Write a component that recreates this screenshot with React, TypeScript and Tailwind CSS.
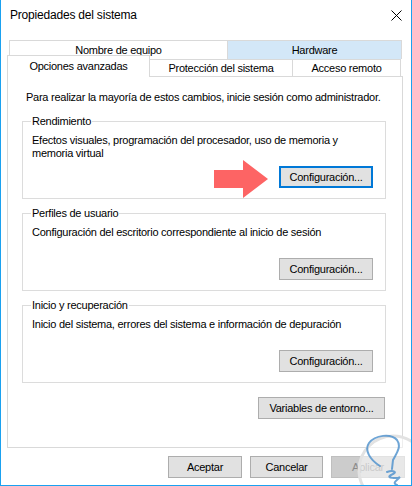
import type { ReactNode } from 'react'

const FONT = "font-['Segoe_UI','Liberation_Sans',Arial,sans-serif]"

function Boton({ children, ancho, foco, deshabilitado }: { children: ReactNode; ancho: string; foco?: boolean; deshabilitado?: boolean }) {
  const base = 'h-[22px] flex items-center justify-center leading-[14px]'
  let estilo = 'bg-[#e1e1e1] border border-[#adadad] text-black'
  if (foco) estilo = 'bg-[#e1e1e1] border-2 border-[#0078d7] text-black'
  if (deshabilitado) estilo = 'bg-[#cccccc] border border-[#bfbfbf] text-[#8a8a8a]'
  return <div className={`${base} ${estilo} ${ancho}`}>{children}</div>
}

function Grupo({ titulo, children, boton }: { titulo: string; children: ReactNode; boton: ReactNode }) {
  return (
    <div className="relative w-[364px] h-[78px] border border-[#dcdcdc] flex flex-col pl-[9px] pr-[12px] pt-[12px] pb-[10px]">
      <span className="absolute -top-[8px] left-[8px] bg-white px-[1px] leading-[14px]">{titulo}</span>
      <div className="leading-[13px] whitespace-nowrap">{children}</div>
      <div className="mt-auto self-end">{boton}</div>
    </div>
  )
}

export default function App() {
  return (
    <div className={`relative w-[412px] h-[486px] overflow-hidden bg-white border-l border-r border-b border-[#1aa1f0] text-[11px] tracking-[-0.25px] text-black ${FONT}`}>
      {/* barra de título */}
      <div className="h-[30px] flex items-center justify-between pl-[9px] pr-[9px]">
        <span className="text-[12px] tracking-[-0.2px] leading-[14px]">Propiedades del sistema</span>
        <svg width="11" height="11" viewBox="0 0 11 11" className="mt-[1px]">
          <path d="M0.5 0.5 L10.5 10.5 M10.5 0.5 L0.5 10.5" stroke="#000" strokeWidth="1" />
        </svg>
      </div>

      <div className="mt-[10px] pl-[6px]">
        {/* fila de pestañas trasera */}
        <div className="flex h-[19px] ml-[2px]">
          <div className="w-[218px] border-t border-l border-[#d9d9d9] flex justify-center pt-[2px] leading-[14px]">
            Nombre de equipo
          </div>
          <div className="w-[175px] border-t border-l border-r border-[#d9d9d9] bg-[#d3e7f8] flex justify-center pt-[2px] leading-[14px]">
            Hardware
          </div>
        </div>

        {/* fila de pestañas delantera */}
        <div className="relative z-10 flex items-end h-[21px] -mt-[4px]">
          <div className="w-[143px] h-[22px] -mb-[1px] bg-white border-t border-l border-r border-[#d9d9d9] flex justify-center pt-[3px] leading-[14px]">
            Opciones avanzadas
          </div>
          <div className="w-[143px] h-[17px] bg-white border-t border-r border-[#d9d9d9] flex items-center justify-center leading-[14px]">
            Protección del sistema
          </div>
          <div className="w-[108px] h-[17px] bg-white border-t border-r border-[#d9d9d9] flex items-center justify-center leading-[14px]">
            Acceso remoto
          </div>
        </div>

        {/* panel */}
        <div className="w-[396px] h-[372px] border border-[#d9d9d9] pl-[14px] pt-[13px]">
          <p className="ml-[4px] leading-[14px] whitespace-nowrap">
            Para realizar la mayoría de estos cambios, inicie sesión como administrador.
          </p>

          <div className="mt-[17px] flex flex-col gap-[14px]">
            <div className="relative">
              <Grupo
                titulo="Rendimiento"
                boton={<Boton ancho="w-[94px]" foco>Configuración...</Boton>}
              >
                Efectos visuales, programación del procesador, uso de memoria y
                <br />
                memoria virtual
              </Grupo>
              {/* flecha roja */}
              <svg width="55" height="39" viewBox="0 0 55 39" className="absolute left-[192px] top-[39px]">
                <polygon points="0,10 29,10 29,0 54,19 29,38 29,28 0,28" fill="#fd6464" />
              </svg>
            </div>

            <Grupo
              titulo="Perfiles de usuario"
              boton={<Boton ancho="w-[94px]">Configuración...</Boton>}
            >
              Configuración del escritorio correspondiente al inicio de sesión
            </Grupo>

            <Grupo
              titulo="Inicio y recuperación"
              boton={<Boton ancho="w-[94px]">Configuración...</Boton>}
            >
              Inicio del sistema, errores del sistema e información de depuración
            </Grupo>
          </div>

          <div className="mt-[14px] w-[363px] flex justify-end">
            <Boton ancho="w-[127px]">Variables de entorno...</Boton>
          </div>
        </div>

        {/* botones inferiores */}
        <div className="mt-[8px] flex justify-end gap-[8px] pr-[6px]">
          <Boton ancho="w-[74px]">Aceptar</Boton>
          <Boton ancho="w-[73px]">Cancelar</Boton>
          <Boton ancho="w-[74px]" deshabilitado>Aplicar</Boton>
        </div>
      </div>

      {/* marca de agua */}
      <svg width="57" height="66" viewBox="0 0 57 66" className="absolute left-[355px] top-[420px]">
        <circle cx="37" cy="50" r="34" fill="rgba(255,255,255,0.55)" stroke="#e2e2e2" strokeWidth="3" />
        <path
          d="M24 46 C14 40 8 30 13 23 C19 15 35 13 41 20 C46 27 40 34 37 40 L36 49 M31 52 C37 50 43 52 35 55 C29 58 41 59 44 57 C40 61 36 63 41 65"
          fill="none"
          stroke="#4a8fcc"
          strokeOpacity="0.8"
          strokeWidth="2"
          strokeLinecap="round"
        />
      </svg>
    </div>
  )
}
